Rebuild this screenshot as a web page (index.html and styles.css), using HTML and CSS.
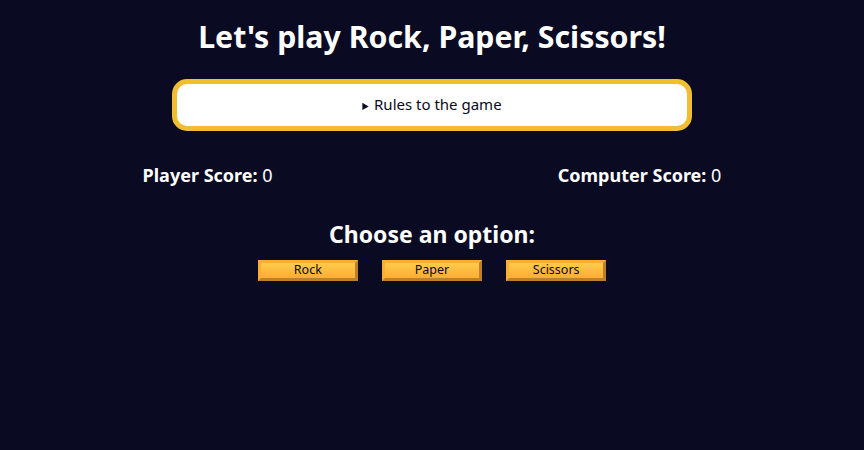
FILE: index.html
```html
<!DOCTYPE html>
<html lang="en">
<head>
<meta charset="UTF-8">
<title>Rock, Paper, Scissors</title>
<link rel="stylesheet" href="styles.css">
</head>
<body>
<h1 class="title">Let's play Rock, Paper, Scissors!</h1>
<details class="rules-container">
  <summary>Rules to the game</summary>
</details>
<div class="score-container">
  <strong class="score-label">Player Score: <span class="score">0</span></strong>
  <strong class="score-label">Computer Score: <span class="score">0</span></strong>
</div>
<section class="options-container">
  <h2 class="options-title">Choose an option:</h2>
  <div class="btn-container">
    <button class="btn">Rock</button>
    <button class="btn">Paper</button>
    <button class="btn">Scissors</button>
  </div>
</section>
</body>
</html>
```
FILE: styles.css
```css
* {
  margin: 0;
  padding: 0;
  box-sizing: border-box;
}

body {
  background-color: #0a0a23;
  text-align: center;
  color: #ffffff;
  font-family: "Noto Sans", "Open Sans", sans-serif;
}

.title {
  margin: 15px 0 20px;
  font-size: 30.3px;
  line-height: 44px;
  font-weight: 700;
}

.rules-container {
  width: 520px;
  margin: 0 auto;
  padding: 10px 0;
  border-radius: 15px;
  border: 5px solid #f1be32;
  background-color: #ffffff;
  color: #0a0a23;
  font-size: 15px;
  line-height: 21px;
}

.rules-container summary {
  cursor: pointer;
}

.rules-container summary::marker {
  font-size: 11px;
}

.score-container {
  display: flex;
  justify-content: space-around;
  margin: 30px 0;
  font-size: 18px;
  line-height: 28px;
}

.score-label {
  font-weight: 700;
}

.score {
  font-weight: 400;
}

.options-title {
  font-size: 23px;
  line-height: 30px;
  margin-bottom: 8px;
}

.btn {
  cursor: pointer;
  width: 100px;
  height: 21px;
  margin: 0 10px;
  font-family: "Noto Sans", "Open Sans", sans-serif;
  font-size: 12.5px;
  line-height: 14px;
  color: #0a0a23;
  background-color: #feac32;
  background-image: linear-gradient(#fecc4c, #ffac33);
  border: 3px solid;
  border-color: #feac32 #b9812c #b9812c #feac32;
}
```
